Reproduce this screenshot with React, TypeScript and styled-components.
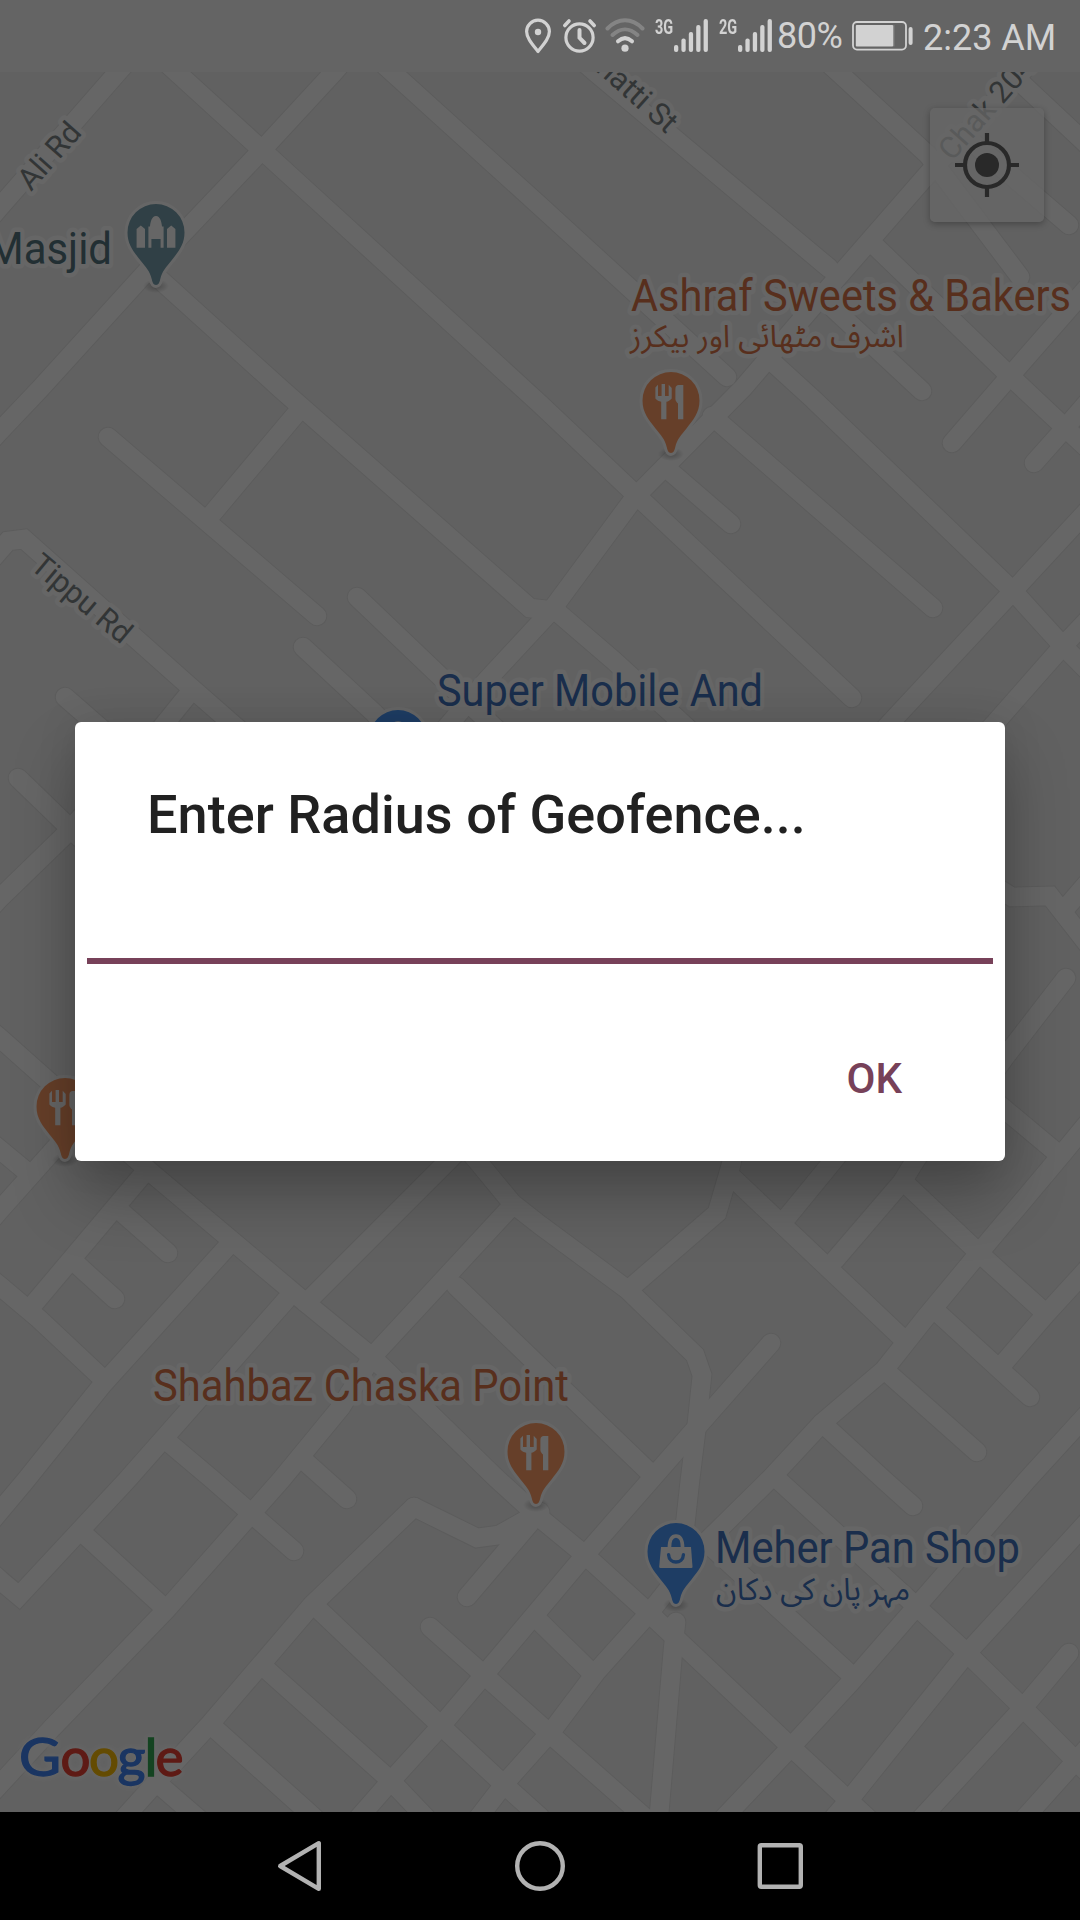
import React from "react";
import styled, { createGlobalStyle } from "styled-components";

const GlobalStyle = createGlobalStyle`
  *, *::before, *::after { box-sizing: border-box; }
  body { margin: 0; background: #000; font-family: Roboto, "Noto Sans", sans-serif; }
`;

const Screen = styled.div`
  display: grid;
  grid-template-rows: 72px 1740px 108px;
  width: 1080px;
  height: 1920px;
  overflow: hidden;
`;

/* ---------- status bar ---------- */

const StatusBar = styled.header`
  display: flex;
  align-items: center;
  padding-left: 524px;
  background: #646464;
  color: #d2d2d2;
`;

const StatusIcon = styled.svg<{ $gap?: number }>`
  flex: none;
  display: block;
  margin-right: ${(p) => p.$gap ?? 0}px;
`;

const NetworkTag = styled.span`
  flex: none;
  width: 19px;
  margin-top: -18px;
  font: 700 21px/21px Roboto, sans-serif;
  white-space: nowrap;
  transform: scaleX(0.69);
  transform-origin: left center;
`;

const StatusText = styled.span<{ $width: number; $shift: number; $spacing?: number }>`
  flex: none;
  width: ${(p) => p.$width}px;
  padding-top: ${(p) => p.$shift}px;
  font-size: 36px;
  line-height: 42px;
  letter-spacing: ${(p) => p.$spacing ?? 0}px;
  white-space: nowrap;
`;

function SignalBars({ gap }: { gap: number }) {
  const tops = [26, 19.5, 13, 6, 0];
  return (
    <StatusIcon width="34" height="34" viewBox="0 0 34 34" $gap={gap}>
      {tops.map((top, i) => (
        <rect key={i} x={i * 7.4} y={top} width="4.3" height={33 - top} rx="2" fill="currentColor" />
      ))}
    </StatusIcon>
  );
}

/* ---------- map ---------- */

const MapArea = styled.main`
  position: relative;
  overflow: hidden;
  background: #f2f2f2;
`;

const MapCanvas = styled.svg`
  display: block;
  width: 1080px;
  height: 1740px;

  .casing { fill: none; stroke: #e6e6e6; stroke-width: 20.6; stroke-linecap: round; stroke-linejoin: miter; }
  .road { fill: none; stroke: #ffffff; stroke-width: 18.6; stroke-linecap: round; stroke-linejoin: miter; }
`;

const MapText = styled.text`
  font-family: Roboto, sans-serif;
  stroke: #ffffff;
  stroke-width: 9px;
  stroke-linejoin: round;
  paint-order: stroke;
`;

const UrduText = styled(MapText)`
  font-family: "Noto Sans Arabic", "DejaVu Sans", sans-serif;
`;

const ROADS = [
  "150,36 118,72 0,207 -20,230",
  "150,48 262,150 540,404 635,494 852,698",
  "355,48 334,72 262,150 148,270 39,390 0,431 -20,453",
  "155,275 281,389 530,608 556,611 613,660 681,722 700,740",
  "366,48 392,72 540,206 727,377",
  "1045,45 1022,72 927,175 838,277 743,388 635,497 550,612 487,680 440,735",
  "570,50 595,72 829,268",
  "812,48 838,72 928,155 1020,277",
  "990,50 1018,80 1080,138 1100,157",
  "970,140 1069,225",
  "873,244 1010,376 1059,422 1100,460",
  "1100,273 1010,376 952,443",
  "1100,388 1066,427 1034,463",
  "820,296 922,391",
  "768,358 814,400 1013,591 1062,645 1100,683",
  "712,416 933,608",
  "665,467 731,524",
  "1100,497 1013,591 891,722 870,745",
  "1100,607 1062,647 996,722 970,750",
  "301,408 212,514",
  "108,437 317,616",
  "-20,573 8,541 24,539 188,685 260,748",
  "192,690 150,742",
  "65,697 120,745",
  "303,647 374,713 410,750",
  "357,597 444,680 510,742",
  "18,778 80,838",
  "110,785 65,835 0,898 -20,920",
  "-12,1028 0,1038 148,1170 300,1298 372,1357 496,1478 540,1518 585,1555 650,1614 790,1746 872,1822",
  "110,1085 58,1145 0,1210 -20,1233",
  "-20,1133 27,1172",
  "145,1172 32,1306",
  "-20,1270 0,1286 39,1319 103,1379",
  "72,1260 115,1299",
  "118,1209 168,1253",
  "228,1246 103,1384 26,1480 -20,1535",
  "286,1300 127,1480 19,1596 0,1580 -20,1562",
  "86,1536 159,1603",
  "168,1442 213,1480 294,1551",
  "509,1209 372,1357 341,1407 281,1480 166,1610 52,1728 -20,1806",
  "306,1303 448,1161 480,1128",
  "450,1128 479,1163 512,1203 540,1225 628,1290 695,1355 702,1375 697,1423 690,1480 684,1535",
  "738,1130 731,1165 717,1213 628,1290",
  "733,1178 900,1336",
  "788,1216 833,1161 850,1140",
  "835,1260 902,1182 915,1161 935,1130",
  "906,1184 978,1252 1042,1310",
  "1100,1108 1063,1153 984,1247 926,1317 884,1370 822,1423 769,1480 705,1543 650,1612 597,1671 554,1728 505,1783 475,1822",
  "771,1343 697,1427 585,1555 484,1675 440,1727 390,1782 355,1822",
  "414,1507 312,1605 210,1724 152,1787 115,1828",
  "414,1507 477,1538 499,1535 540,1512",
  "467,1597 530,1523",
  "316,1607 440,1725 499,1780 540,1817",
  "266,1669 390,1780 430,1822",
  "430,1627 484,1675 549,1733 650,1822",
  "212,1726 308,1812 320,1823",
  "156,1782 200,1820",
  "540,1622 592,1673",
  "707,1543 848,1672",
  "1100,1400 1027,1480 917,1606 850,1683 790,1748 718,1824",
  "822,1423 884,1480 913,1506",
  "775,1477 845,1541 967,1653 1023,1708 1100,1785",
  "1100,1508 967,1653 849,1800 830,1822",
  "1069,1653 1023,1708 927,1812 915,1825",
  "1090,1745 1030,1812 1018,1825",
  "938,1313 1030,1397",
  "888,1373 977,1452",
  "1002,1365 1046,1314 1100,1255",
  "990,1097 1057,1153",
  "1066,978 1005,1057 985,1085",
  "985,880 1012,897 1050,896 1100,960",
  "1064,910 1090,880",
  "456,1286 647,1470",
  "300,1457 347,1499",
  "676,1622 673,1650 659,1815 658,1825",
];

const PIN =
  "M0 0C-2.6 0-3.6-3-4.3-6C-6-14-10.5-18-15.5-24.5C-22-33-28.5-40-28.5-52.5A28.5 28.5 0 0 1 28.5-52.5C28.5-40 22-33 15.5-24.5C10.5-18 6-14 4.3-6C3.6-3 2.6 0 0 0Z";

type PinKind = "food" | "mosque" | "shop";
const PIN_FILL: Record<PinKind, string> = { food: "#ff9f68", mosque: "#78a0ae", shop: "#4b98fb" };

function MapPin({ x, y, kind }: { x: number; y: number; kind: PinKind }) {
  const fill = PIN_FILL[kind];
  return (
    <g transform={`translate(${x} ${y})`}>
      <ellipse cx="0" cy="1" rx="13" ry="7" fill="url(#pinShadow)" />
      <path d={PIN} fill={fill} stroke="#fff" strokeWidth="6" strokeLinejoin="round" style={{ paintOrder: "stroke" }} />
      {kind === "food" && (
        <g fill="#fff">
          <path d="M-15.6-65.5L-13-68.3V-57H-9.4V-69H-6V-57H-2.3V-68.3L.7-65V-54.5C-1-52.5-3-51.6-4.6-51.2V-33.8H-9.8V-51.2C-12-51.6-14-52.8-15.6-54.5Z" />
          <path d="M4.4-64C4.4-67 6-68 7.5-68H12.3V-33.8H7V-49.5C5.5-51 4.4-52.5 4.4-54Z" />
        </g>
      )}
      {kind === "mosque" && (
        <g fill="#fff">
          <path d="M-19.4-37.3V-56L-15.2-59.4L-11-56V-37.3Z" />
          <path d="M11-37.3V-56L15.2-59.4L19.4-56V-37.3Z" />
          <path d="M-7.6-37.3V-58.5H-6C-5.6-63-4.2-69 0-69S5.6-63 6-58.5H7.6V-37.3H4.6V-46H-4.6V-37.3Z" />
        </g>
      )}
      {kind === "shop" && (
        <g>
          <path d="M-15-57H15L16.5-37.2Q16.5-36 15.5-36H-15.5Q-16.8-36-16.8-37.2Z" fill="#fff" />
          <path d="M-6.6-56C-6.6-63-5-68 0-68S6.6-63 6.6-56" fill="none" stroke="#fff" strokeWidth="3.6" />
          <path d="M-7.4-49.3C-7-39.5 7-39.5 7.4-49.3" fill="none" stroke={fill} strokeWidth="3.4" strokeLinecap="round" />
        </g>
      )}
    </g>
  );
}

const POI_LABELS = [
  { text: "Masjid", x: -13, y: 263.5, width: 125, fill: "#55757f" },
  { text: "Ashraf Sweets & Bakers", x: 631, y: 310.5, width: 440, fill: "#dc764a" },
  { text: "Super Mobile And", x: 437, y: 706, width: 326, fill: "#4273bd" },
  { text: "Shahbaz Chaska Point", x: 153, y: 1400.5, width: 416, fill: "#dc764a" },
  { text: "Meher Pan Shop", x: 715, y: 1563, width: 305, fill: "#4273bd" },
];

const URDU_LABELS = [
  { text: "اشرف مٹھائی اور بیکرز", x: 630, y: 346.5, width: 274, fill: "#dc764a" },
  { text: "مہر پان کی دکان", x: 716, y: 1600, width: 194, fill: "#4273bd" },
];

const STREET_LABELS = [
  { text: "Ali Rd", x: 31, y: 192, angle: -48.5 },
  { text: "Tippu Rd", x: 29, y: 568, angle: 39.8 },
  { text: "Bhatti St", x: 580.5, y: 57.5, angle: 41.8 },
  { text: "Chak 204", x: 952, y: 162, angle: -48.5 },
];

const LOGO_LETTERS = [
  { letter: "G", x: 19, width: 42, fill: "#4285f4" },
  { letter: "o", x: 60.5, width: 30, fill: "#ea4335" },
  { letter: "o", x: 89, width: 30, fill: "#fbbc05" },
  { letter: "g", x: 117.5, width: 28, fill: "#4285f4" },
  { letter: "l", x: 144.5, width: 13, fill: "#34a853" },
  { letter: "e", x: 155.5, width: 28, fill: "#ea4335" },
];

const LogoText = styled.text`
  font: 400 53px Lato, sans-serif;
  stroke-width: 1.3px;
`;

const LogoGroup = styled.g`
  filter: drop-shadow(0 0 3px #ffffff) drop-shadow(0 0 2px #ffffff);
`;

const LocateButton = styled.button`
  position: absolute;
  top: 36px;
  right: 36px;
  display: grid;
  place-items: center;
  width: 114px;
  height: 114px;
  padding: 0;
  border: 0;
  border-radius: 5px;
  background: rgba(255, 255, 255, 0.75);
  box-shadow: 0 2px 7px rgba(0, 0, 0, 0.3);
`;

const Scrim = styled.div`
  position: absolute;
  inset: 0;
  display: flex;
  align-items: center;
  justify-content: center;
  padding-bottom: 1px;
  background: rgba(0, 0, 0, 0.6);
`;

/* ---------- dialog ---------- */

const Dialog = styled.section`
  display: flex;
  flex-direction: column;
  width: 930px;
  height: 439px;
  padding: 60px 12px 43px;
  border-radius: 6px;
  background: #fff;
  box-shadow: 0 36px 62px rgba(0, 0, 0, 0.26), 0 0 40px rgba(0, 0, 0, 0.1);
`;

const DialogTitle = styled.h1`
  margin: 0;
  padding-left: 60px;
  font-size: 54px;
  font-weight: 500;
  line-height: 66px;
  letter-spacing: 0.05px;
  color: #212121;
  white-space: nowrap;
`;

const RadiusField = styled.input`
  width: 100%;
  height: 116px;
  padding: 0 12px;
  border: 0;
  border-bottom: 6px solid #774159;
  outline: 0;
  background: transparent;
  font: 400 48px Roboto, sans-serif;
`;

const DialogActions = styled.div`
  display: flex;
  justify-content: flex-end;
  margin-top: auto;
  padding-right: 67px;
`;

const DialogButton = styled.button`
  height: 78px;
  padding: 0 24px;
  border: 0;
  background: transparent;
  color: #774159;
  font: 500 42px/78px Roboto, sans-serif;
`;

/* ---------- navigation bar ---------- */

const NavBar = styled.nav`
  display: grid;
  grid-template-columns: repeat(3, 240px);
  justify-content: center;
  align-items: center;
  justify-items: center;
  background: #000;
`;

const NavIcon = styled.svg`
  display: block;
  width: 60px;
  height: 60px;
  fill: none;
  stroke: #b2b2b2;
  stroke-width: 4.4;
  stroke-linejoin: round;
`;

export default function App() {
  return (
    <>
      <GlobalStyle />
      <Screen>
        <StatusBar>
          <StatusIcon width="28" height="36" viewBox="0 0 28 36" $gap={10}>
            <path d="M14 33.5C8 26 2.6 20 2.6 13.6a11.4 11.4 0 0 1 22.8 0C25.4 20 20 26 14 33.5Z" fill="none" stroke="currentColor" strokeWidth="3.2" strokeLinejoin="round" />
            <circle cx="14" cy="14" r="3.2" fill="currentColor" />
          </StatusIcon>
          <StatusIcon width="36" height="36" viewBox="0 0 36 36" $gap={7}>
            <g fill="none" stroke="currentColor" strokeWidth="3.2" strokeLinecap="round">
              <circle cx="17.5" cy="19.5" r="13.6" />
              <path d="M17.5 12v7.8l5 5.2" strokeWidth="4" />
              <path d="M2.8 7.5 7 3M32.2 7.5 28 3" strokeWidth="3.6" />
            </g>
          </StatusIcon>
          <StatusIcon width="40" height="36" viewBox="0 0 40 36" $gap={10}>
            <g fill="none" stroke="currentColor" strokeWidth="4" strokeLinecap="round">
              <path d="M2.5 10.5C13-.5 27-.5 37.5 10.5" opacity="0.3" />
              <path d="M7.5 17C15.5 9.5 24.5 9.5 32.5 17" opacity="0.3" />
              <path d="M13 23.3C17.5 19.3 22.5 19.3 27 23.3" />
            </g>
            <circle cx="20" cy="30.2" r="3.6" fill="currentColor" />
          </StatusIcon>
          <NetworkTag>3G</NetworkTag>
          <SignalBars gap={11} />
          <NetworkTag>2G</NetworkTag>
          <SignalBars gap={5} />
          <StatusText $width={75} $shift={0} $spacing={-0.5}>80%</StatusText>
          <StatusIcon width="62" height="30" viewBox="0 0 62 30" $gap={9}>
            <rect x="1" y="1" width="53" height="27.6" rx="4" fill="none" stroke="currentColor" strokeWidth="1.8" />
            <rect x="3.8" y="4" width="37.4" height="21.4" rx="1" fill="currentColor" />
            <rect x="41.2" y="4" width="1.2" height="21.4" fill="currentColor" opacity="0.3" />
            <rect x="56.6" y="6" width="4" height="18" rx="2" fill="currentColor" />
          </StatusIcon>
          <StatusText $width={140} $shift={3}>2:23 AM</StatusText>
        </StatusBar>

        <MapArea>
          <MapCanvas viewBox="0 72 1080 1740">
            <defs>
              <radialGradient id="pinShadow">
                <stop offset="0.2" stopColor="#000" stopOpacity="0.22" />
                <stop offset="1" stopColor="#000" stopOpacity="0" />
              </radialGradient>
            </defs>
            {ROADS.map((points) => (
              <polyline key={points} className="casing" points={points} />
            ))}
            {ROADS.map((points) => (
              <polyline key={points} className="road" points={points} />
            ))}
            {STREET_LABELS.map((s) => (
              <MapText key={s.text} fontSize="30.5" fill="#7d8687" transform={`translate(${s.x} ${s.y}) rotate(${s.angle})`}>
                {s.text}
              </MapText>
            ))}
            <MapPin x={156} y={285} kind="mosque" />
            <MapPin x={671} y={453} kind="food" />
            <MapPin x={398} y={791} kind="shop" />
            <MapPin x={65} y={1159} kind="food" />
            <MapPin x={536} y={1504} kind="food" />
            <MapPin x={676} y={1604} kind="shop" />
            {POI_LABELS.map((l) => (
              <MapText key={l.text} x={l.x} y={l.y} fontSize="44.5" fill={l.fill} textLength={l.width} lengthAdjust="spacingAndGlyphs">
                {l.text}
              </MapText>
            ))}
            {URDU_LABELS.map((l) => (
              <UrduText key={l.text} x={l.x + l.width} y={l.y} direction="rtl" fontSize="31" fill={l.fill} textLength={l.width} lengthAdjust="spacingAndGlyphs">
                {l.text}
              </UrduText>
            ))}
            <LogoGroup>
              {LOGO_LETTERS.map((l, i) => (
                <LogoText key={i} x={l.x} y="1775.5" fill={l.fill} stroke={l.fill} textLength={l.width} lengthAdjust="spacingAndGlyphs">
                  {l.letter}
                </LogoText>
              ))}
            </LogoGroup>
          </MapCanvas>
          <LocateButton aria-label="My location">
            <svg width="66" height="66" viewBox="0 0 66 66">
              <circle cx="33" cy="33" r="22" fill="none" stroke="#666" strokeWidth="4.2" />
              <circle cx="33" cy="33" r="12" fill="#666" />
              <path d="M33 1v9M33 56v9M1 33h9M56 33h9" stroke="#666" strokeWidth="4.2" />
            </svg>
          </LocateButton>
          <Scrim>
            <Dialog role="dialog">
              <DialogTitle>Enter Radius of Geofence...</DialogTitle>
              <RadiusField aria-label="Radius" />
              <DialogActions>
                <DialogButton>OK</DialogButton>
              </DialogActions>
            </Dialog>
          </Scrim>
        </MapArea>

        <NavBar>
          <NavIcon viewBox="0 0 60 60">
            <path d="M48.8 7.2V52.8L10.2 30Z" />
          </NavIcon>
          <NavIcon viewBox="0 0 60 60">
            <circle cx="30" cy="30" r="22.8" />
          </NavIcon>
          <NavIcon viewBox="0 0 60 60">
            <rect x="9.8" y="9.3" width="41" height="41.4" rx="1.5" />
          </NavIcon>
        </NavBar>
      </Screen>
    </>
  );
}
